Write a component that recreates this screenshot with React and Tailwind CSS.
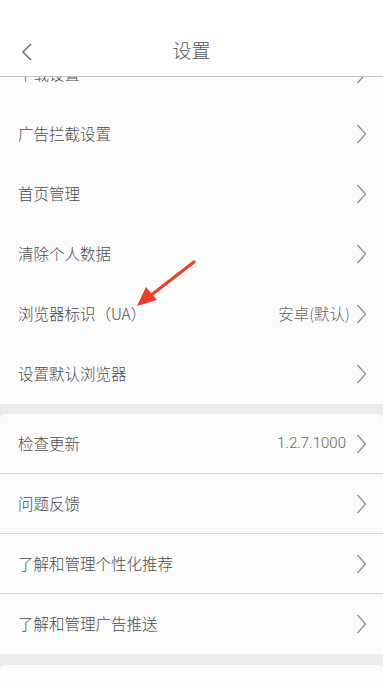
import React from "react";

const font = { fontFamily: '"Noto Sans CJK SC", "Noto Sans", sans-serif' };

// Flecha derecha de cada fila
const Chevron = () => (
  <svg width="11" height="20" viewBox="0 0 11 20" className="shrink-0">
    <path d="M1.5 1 L9.5 10 L1.5 19" fill="none" stroke="#8a8a8a" strokeWidth="1.2" />
  </svg>
);

const Fila = ({ label, value, divider, mono }) => (
  <div
    className={`h-[60px] flex items-center pl-[18px] pr-[16px] ${
      divider ? "border-b border-[#d6d6d6]" : ""
    }`}
  >
    <span className="flex-1 text-[15.5px] text-[#4d4d4d] font-light">{label}</span>
    {value && (
      <span
        className={`text-[#666] font-light ${mono ? "text-[15px] mr-[10px]" : "text-[15.5px] mr-[6px]"}`}
        style={mono ? { fontFamily: 'Roboto, "Noto Sans CJK SC", sans-serif' } : undefined}
      >
        {value}
      </span>
    )}
    <Chevron />
  </div>
);

export default function App() {
  const seccion1 = [
    { label: "下载设置" },
    { label: "广告拦截设置" },
    { label: "首页管理" },
    { label: "清除个人数据" },
    { label: "浏览器标识（UA）", value: "安卓(默认)" },
    { label: "设置默认浏览器" },
  ];
  const seccion2 = [
    { label: "检查更新", value: "1.2.7.1000", mono: true },
    { label: "问题反馈" },
    { label: "了解和管理个性化推荐" },
    { label: "了解和管理广告推送" },
  ];

  return (
    <div className="w-[383px] h-[682px] overflow-hidden bg-[#ebebeb] relative" style={font}>
      {/* Encabezado */}
      <div className="h-[77px] bg-white border-b border-[#c4c4c4] flex items-end pb-[15px] relative z-10">
        <div className="w-[52px] flex justify-center pl-[2px]">
          <svg width="12" height="18" viewBox="0 0 12 18">
            <path d="M10 1 L2 9 L10 17" fill="none" stroke="#666" strokeWidth="1.4" />
          </svg>
        </div>
        <div className="flex-1 text-center text-[19px] text-[#555] font-light pr-[52px] leading-none pb-[2px]">设置</div>
      </div>

      {/* Contenido desplazado */}
      <div className="-mt-[33px]">
        <div className="bg-[#fbfbfb]">
          {seccion1.map((f) => (
            <Fila key={f.label} {...f} />
          ))}
        </div>
        <div className="h-[10px]" />
        <div className="bg-[#fbfbfb] rounded-t-[5px]">
          {seccion2.map((f, i) => (
            <Fila key={f.label} {...f} divider={i < seccion2.length - 1} />
          ))}
        </div>
        <div className="h-[11px]" />
        <div className="bg-[#fbfbfb] rounded-t-[5px] h-[40px]" />
      </div>

      {/* Flecha roja de anotacion */}
      <svg
        className="absolute left-0 top-0 pointer-events-none z-20"
        width="383"
        height="682"
        viewBox="0 0 383 682"
      >
        <line x1="194" y1="262" x2="150" y2="296" stroke="#e8402a" strokeWidth="3.2" strokeLinecap="round" />
        <polygon points="137,306 146,287 157,300" fill="#e8402a" />
      </svg>
    </div>
  );
}
